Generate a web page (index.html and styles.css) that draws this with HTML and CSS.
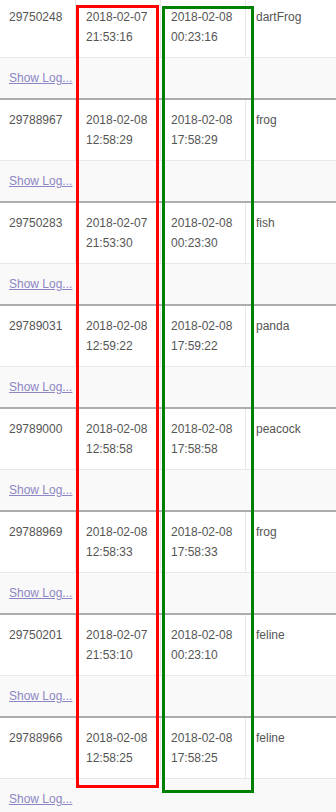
FILE: index.html
```html
<!DOCTYPE html>
<html>
<head>
<meta charset="utf-8">
<link rel="stylesheet" href="styles.css">
</head>
<body>
<div class="page">
  <div class="list">
    <div class="group">
      <div class="data"><div class="cell first">29750248</div><div class="cell">2018-02-07<br>21:53:16</div><div class="cell">2018-02-08<br>00:23:16</div><div class="cell last">dartFrog</div></div>
      <div class="log"><a href="#" class="link">Show Log...</a></div>
    </div>
    <div class="group">
      <div class="data"><div class="cell first">29788967</div><div class="cell">2018-02-08<br>12:58:29</div><div class="cell">2018-02-08<br>17:58:29</div><div class="cell last">frog</div></div>
      <div class="log"><a href="#" class="link">Show Log...</a></div>
    </div>
    <div class="group">
      <div class="data"><div class="cell first">29750283</div><div class="cell">2018-02-07<br>21:53:30</div><div class="cell">2018-02-08<br>00:23:30</div><div class="cell last">fish</div></div>
      <div class="log"><a href="#" class="link">Show Log...</a></div>
    </div>
    <div class="group">
      <div class="data"><div class="cell first">29789031</div><div class="cell">2018-02-08<br>12:59:22</div><div class="cell">2018-02-08<br>17:59:22</div><div class="cell last">panda</div></div>
      <div class="log"><a href="#" class="link">Show Log...</a></div>
    </div>
    <div class="group">
      <div class="data"><div class="cell first">29789000</div><div class="cell">2018-02-08<br>12:58:58</div><div class="cell">2018-02-08<br>17:58:58</div><div class="cell last">peacock</div></div>
      <div class="log"><a href="#" class="link">Show Log...</a></div>
    </div>
    <div class="group">
      <div class="data"><div class="cell first">29788969</div><div class="cell">2018-02-08<br>12:58:33</div><div class="cell">2018-02-08<br>17:58:33</div><div class="cell last">frog</div></div>
      <div class="log"><a href="#" class="link">Show Log...</a></div>
    </div>
    <div class="group">
      <div class="data"><div class="cell first">29750201</div><div class="cell">2018-02-07<br>21:53:10</div><div class="cell">2018-02-08<br>00:23:10</div><div class="cell last">feline</div></div>
      <div class="log"><a href="#" class="link">Show Log...</a></div>
    </div>
    <div class="group">
      <div class="data"><div class="cell first">29788966</div><div class="cell">2018-02-08<br>12:58:25</div><div class="cell">2018-02-08<br>17:58:25</div><div class="cell last">feline</div></div>
      <div class="log"><a href="#" class="link">Show Log...</a></div>
    </div>
  </div>
  <div class="mark mark-red"></div>
  <div class="mark mark-green"></div>
</div>
</body>
</html>
```

FILE: styles.css
```css
html, body {
  margin: 0;
  padding: 0;
  background: #ffffff;
}
.page {
  position: relative;
  width: 336px;
  height: 812px;
  overflow: hidden;
  font-family: "Liberation Sans", Arial, sans-serif;
  font-size: 12px;
  color: #555555;
}
.list {
  margin-top: -5px;
  display: flex;
  flex-direction: column;
}
.group {
  border-top: 2px solid #adadad;
}
.data {
  display: grid;
  grid-template-columns: 76px 85px 85px 1fr;
  height: 61px;
  box-sizing: border-box;
  border-bottom: 1px solid #e8e8e8;
  background: #ffffff;
}
.cell {
  box-sizing: border-box;
  padding: 10px 10px 0 10px;
  line-height: 20px;
  border-right: 1px solid #e8e8e8;
}
.cell.first {
  padding-left: 9px;
}
.cell.last {
  border-right: none;
}
.log {
  height: 40px;
  box-sizing: border-box;
  padding: 10px 9px 0 9px;
  line-height: 20px;
  background: #f9f9f9;
}
.link {
  font-size: 12px;
  color: #8c86c4;
  text-decoration: underline;
}
.mark {
  position: absolute;
  box-sizing: border-box;
  border: 3px solid;
}
.mark-red {
  left: 76px;
  top: 5px;
  width: 83px;
  height: 783px;
  border-color: #ff0000;
}
.mark-green {
  left: 162px;
  top: 6px;
  width: 92px;
  height: 787px;
  border-color: #008000;
}
```
